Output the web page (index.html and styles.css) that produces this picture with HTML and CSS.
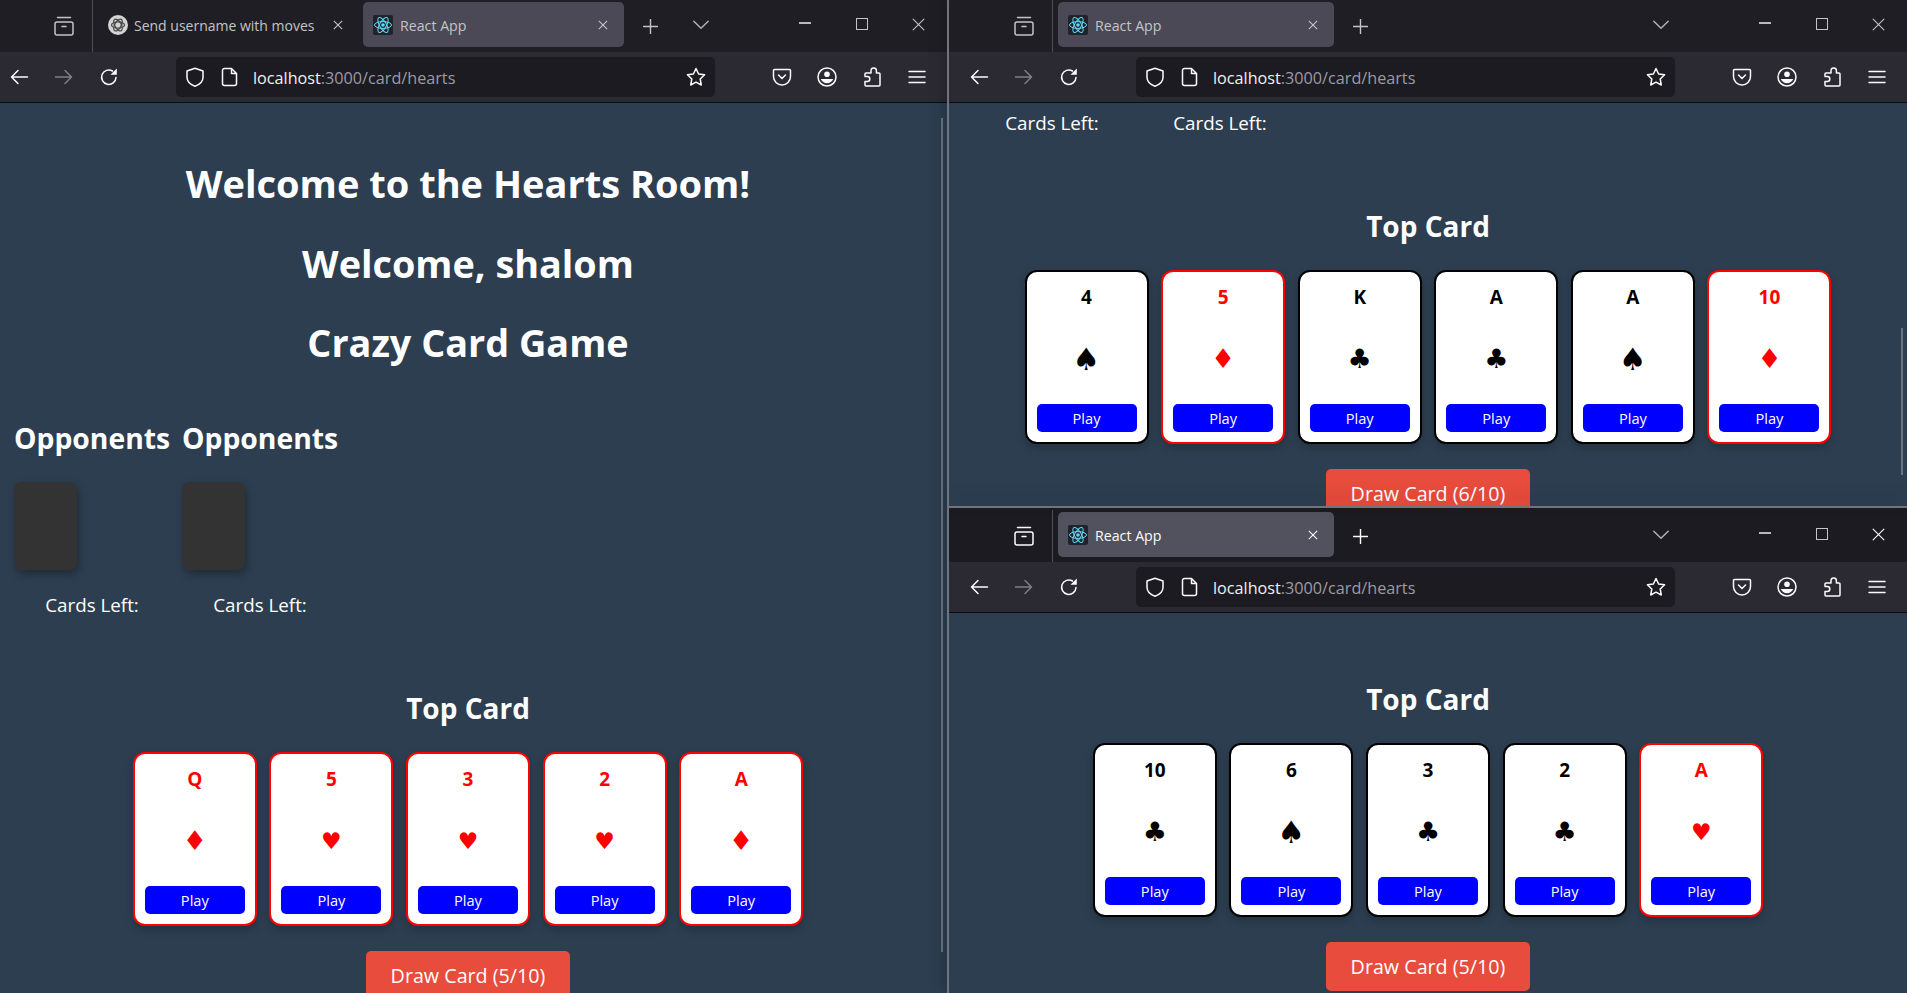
FILE: index.html
```html
<!DOCTYPE html>
<html lang="en">
<head>
  <meta charset="UTF-8" />
  <title>React App</title>
  <link rel="stylesheet" href="styles.css">
</head>
<body>
  <svg class="sprites" width="0" height="0">
    <symbol id="i-archive" viewBox="0 0 20 20"><path d="M3.5 1.5h13M8 10.5h4"/><rect x="1" y="6" width="18" height="13" rx="2"/></symbol>
    <symbol id="i-back" viewBox="0 0 20 20"><path d="M18.5 10H2.5M9 3.5 2.5 10 9 16.5"/></symbol>
    <symbol id="i-forward" viewBox="0 0 20 20"><path d="M1.5 10h16M11 3.5l6.5 6.5-6.5 6.500"/></symbol>
    <symbol id="i-reload" viewBox="0 0 20 20"><path d="M17 10.5A7.2 7.2 0 1 1 13.5 4"/><path class="solid" d="M17.800 1.500v6.300h-6.300z"/></symbol>
    <symbol id="i-shield" viewBox="0 0 20 20"><path d="M10 1.200 18 4v6.200c0 4.600-3.600 7.400-8 9-4.400-1.600-8-4.400-8-9V4z"/></symbol>
    <symbol id="i-page" viewBox="0 0 20 20"><path d="M4.500 1.500h7l5 5V16.500a2 2 0 0 1-2 2h-10a2 2 0 0 1-2-2v-13a2 2 0 0 1 2-2zM11.500 1.500v5h5"/></symbol>
    <symbol id="i-star" viewBox="0 0 20 20"><path d="m10 1.500 2.600 5.500 6 .8-4.400 4.200 1.100 6L10 15.100 4.700 18l1.100-6-4.400-4.200 6-.8z"/></symbol>
    <symbol id="i-pocket" viewBox="0 0 20 20"><path d="M2.500 2.500h15a1 1 0 0 1 1 1v6a8.500 8.500 0 0 1-17 0v-6a1 1 0 0 1 1-1z"/><path d="M6.500 8 10 11.500 13.500 8"/></symbol>
    <symbol id="i-account" viewBox="0 0 20 20"><circle cx="10" cy="10" r="9"/><circle class="solid" cx="10" cy="7.300" r="2.800"/><path class="solid" d="M3.800 12h12.400a6.700 6.700 0 0 1-12.400 0z"/></symbol>
    <symbol id="i-puzzle" viewBox="0 0 20 20"><path d="M3 9.500V7a1 1 0 0 1 1-1h5V3.800a2.700 2.700 0 0 1 5.400 0V6H17a1 1 0 0 1 1 1v11a1 1 0 0 1-1 1H4a1 1 0 0 1-1-1v-3.500h2.300a2.500 2.500 0 0 0 0-5z"/></symbol>
    <symbol id="i-menu" viewBox="0 0 20 20"><path d="M2 4.500h16M2 10h16M2 15.500h16"/></symbol>
    <symbol id="i-x" viewBox="0 0 12 12"><path d="m1 1 10 10M11 1 1 11"/></symbol>
    <symbol id="i-plus" viewBox="0 0 16 16"><path d="M8 .5v15M.5 8h15"/></symbol>
    <symbol id="i-chevron" viewBox="0 0 16 10"><path d="m.8 1.200 7.200 7 7.200-7"/></symbol>
    <symbol id="i-react" viewBox="0 0 20 20">
      <rect class="react-bg" width="20" height="20" rx="2"/>
      <g class="react-atom"><ellipse cx="10" cy="10" rx="8.500" ry="3.400"/><ellipse cx="10" cy="10" rx="8.500" ry="3.400" transform="rotate(60 10 10)"/><ellipse cx="10" cy="10" rx="8.500" ry="3.400" transform="rotate(120 10 10)"/><circle class="react-dot" cx="10" cy="10" r="1.800"/></g>
    </symbol>
    <symbol id="i-gpt" viewBox="0 0 20 20">
      <circle class="gpt-bg" cx="10" cy="10" r="10"/>
      <g class="gpt-knot"><ellipse cx="10" cy="10" rx="6.500" ry="3.200"/><ellipse cx="10" cy="10" rx="6.500" ry="3.200" transform="rotate(60 10 10)"/><ellipse cx="10" cy="10" rx="6.500" ry="3.200" transform="rotate(120 10 10)"/></g>
    </symbol>
  </svg>

  <!-- left window -->
  <section class="window window-left">
    <div class="tabbar">
      <svg class="ico archive"><use href="#i-archive"/></svg>
      <span class="tab-sep"></span>
      <div class="tab tab-plain">
        <svg class="favicon"><use href="#i-gpt"/></svg>
        <span class="tab-title">Send username with moves</span>
        <svg class="tab-close"><use href="#i-x"/></svg>
      </div>
      <div class="tab tab-current">
        <svg class="favicon"><use href="#i-react"/></svg>
        <span class="tab-title">React App</span>
        <svg class="tab-close"><use href="#i-x"/></svg>
      </div>
      <svg class="ico plus"><use href="#i-plus"/></svg>
      <svg class="ico chevron"><use href="#i-chevron"/></svg>
      <svg class="ico win-min"><use href="#i-menu"/></svg>
      <span class="win-max"></span>
      <svg class="ico win-close"><use href="#i-x"/></svg>
    </div>
    <div class="toolbar">
      <svg class="ico nav"><use href="#i-back"/></svg>
      <svg class="ico nav nav-off"><use href="#i-forward"/></svg>
      <svg class="ico nav"><use href="#i-reload"/></svg>
      <div class="urlbar">
        <svg class="ico url-shield"><use href="#i-shield"/></svg>
        <svg class="ico url-page"><use href="#i-page"/></svg>
        <span class="url-text"><b>localhost</b>:3000/card/hearts</span>
        <svg class="ico url-star"><use href="#i-star"/></svg>
      </div>
      <svg class="ico tool tool-first"><use href="#i-pocket"/></svg>
      <svg class="ico tool"><use href="#i-account"/></svg>
      <svg class="ico tool"><use href="#i-puzzle"/></svg>
      <svg class="ico tool"><use href="#i-menu"/></svg>
    </div>
    <main class="content content-full">
      <h1>Welcome to the Hearts Room!</h1>
      <h2 class="sub">Welcome, shalom</h2>
      <h2 class="sub sub-last">Crazy Card Game</h2>
      <div class="opponents">
        <div class="opp">
          <h3>Opponents</h3>
          <div class="opp-card"></div>
          <p class="cards-left">Cards Left:</p>
        </div>
        <div class="opp">
          <h3>Opponents</h3>
          <div class="opp-card"></div>
          <p class="cards-left">Cards Left:</p>
        </div>
      </div>
      <h3 class="top-card">Top Card</h3>
      <div class="hand">
        <div class="card red"><span class="rank">Q</span><span class="suit">♦</span><button class="play">Play</button></div>
        <div class="card red"><span class="rank">5</span><span class="suit suit-heart">♥</span><button class="play">Play</button></div>
        <div class="card red"><span class="rank">3</span><span class="suit suit-heart">♥</span><button class="play">Play</button></div>
        <div class="card red"><span class="rank">2</span><span class="suit suit-heart">♥</span><button class="play">Play</button></div>
        <div class="card red"><span class="rank">A</span><span class="suit">♦</span><button class="play">Play</button></div>
      </div>
      <button class="draw">Draw Card (5/10)</button>
    </main>
    <span class="thumb thumb-left"></span>
  </section>

  <div class="split-v"></div>

  <div class="stack">
    <!-- top right window -->
    <section class="window window-top">
      <div class="tabbar">
        <svg class="ico archive"><use href="#i-archive"/></svg>
        <span class="tab-sep"></span>
        <div class="tab tab-current tab-wide">
          <svg class="favicon"><use href="#i-react"/></svg>
          <span class="tab-title">React App</span>
          <svg class="tab-close"><use href="#i-x"/></svg>
        </div>
        <svg class="ico plus"><use href="#i-plus"/></svg>
        <svg class="ico chevron"><use href="#i-chevron"/></svg>
        <svg class="ico win-min"><use href="#i-menu"/></svg>
        <span class="win-max"></span>
        <svg class="ico win-close"><use href="#i-x"/></svg>
      </div>
      <div class="toolbar">
        <svg class="ico nav"><use href="#i-back"/></svg>
        <svg class="ico nav nav-off"><use href="#i-forward"/></svg>
        <svg class="ico nav"><use href="#i-reload"/></svg>
        <div class="urlbar">
          <svg class="ico url-shield"><use href="#i-shield"/></svg>
          <svg class="ico url-page"><use href="#i-page"/></svg>
          <span class="url-text"><b>localhost</b>:3000/card/hearts</span>
          <svg class="ico url-star"><use href="#i-star"/></svg>
        </div>
        <svg class="ico tool tool-first"><use href="#i-pocket"/></svg>
        <svg class="ico tool"><use href="#i-account"/></svg>
        <svg class="ico tool"><use href="#i-puzzle"/></svg>
        <svg class="ico tool"><use href="#i-menu"/></svg>
      </div>
      <main class="content content-scrolled">
        <div class="opponents">
          <div class="opp"><p class="cards-left cards-left-top">Cards Left:</p></div>
          <div class="opp"><p class="cards-left cards-left-top">Cards Left:</p></div>
        </div>
        <h3 class="top-card">Top Card</h3>
        <div class="hand">
          <div class="card"><span class="rank">4</span><span class="suit suit-spade">♠</span><button class="play">Play</button></div>
          <div class="card red"><span class="rank">5</span><span class="suit">♦</span><button class="play">Play</button></div>
          <div class="card"><span class="rank">K</span><span class="suit">♣</span><button class="play">Play</button></div>
          <div class="card"><span class="rank">A</span><span class="suit">♣</span><button class="play">Play</button></div>
          <div class="card"><span class="rank">A</span><span class="suit suit-spade">♠</span><button class="play">Play</button></div>
          <div class="card red"><span class="rank">10</span><span class="suit">♦</span><button class="play">Play</button></div>
        </div>
        <button class="draw">Draw Card (6/10)</button>
      </main>
      <span class="thumb thumb-top"></span>
    </section>

    <div class="split-h"></div>

    <!-- bottom right window, this one has focus -->
    <section class="window window-bottom focused">
      <div class="tabbar">
        <svg class="ico archive"><use href="#i-archive"/></svg>
        <span class="tab-sep"></span>
        <div class="tab tab-current tab-wide">
          <svg class="favicon"><use href="#i-react"/></svg>
          <span class="tab-title">React App</span>
          <svg class="tab-close"><use href="#i-x"/></svg>
        </div>
        <svg class="ico plus"><use href="#i-plus"/></svg>
        <svg class="ico chevron"><use href="#i-chevron"/></svg>
        <svg class="ico win-min"><use href="#i-menu"/></svg>
        <span class="win-max"></span>
        <svg class="ico win-close"><use href="#i-x"/></svg>
      </div>
      <div class="toolbar">
        <svg class="ico nav"><use href="#i-back"/></svg>
        <svg class="ico nav nav-off"><use href="#i-forward"/></svg>
        <svg class="ico nav"><use href="#i-reload"/></svg>
        <div class="urlbar">
          <svg class="ico url-shield"><use href="#i-shield"/></svg>
          <svg class="ico url-page"><use href="#i-page"/></svg>
          <span class="url-text"><b>localhost</b>:3000/card/hearts</span>
          <svg class="ico url-star"><use href="#i-star"/></svg>
        </div>
        <svg class="ico tool tool-first"><use href="#i-pocket"/></svg>
        <svg class="ico tool"><use href="#i-account"/></svg>
        <svg class="ico tool"><use href="#i-puzzle"/></svg>
        <svg class="ico tool"><use href="#i-menu"/></svg>
      </div>
      <main class="content content-bottom">
        <h3 class="top-card top-card-first">Top Card</h3>
        <div class="hand">
          <div class="card"><span class="rank">10</span><span class="suit">♣</span><button class="play">Play</button></div>
          <div class="card"><span class="rank">6</span><span class="suit suit-spade">♠</span><button class="play">Play</button></div>
          <div class="card"><span class="rank">3</span><span class="suit">♣</span><button class="play">Play</button></div>
          <div class="card"><span class="rank">2</span><span class="suit">♣</span><button class="play">Play</button></div>
          <div class="card red"><span class="rank">A</span><span class="suit suit-heart">♥</span><button class="play">Play</button></div>
        </div>
        <button class="draw">Draw Card (5/10)</button>
      </main>
    </section>
  </div>
</body>
</html>
```

FILE: styles.css
```css
html, body {
  margin: 0;
  height: 100%;
}
body {
  display: flex;
  width: 1907px;
  height: 993px;
  overflow: hidden;
  background: #2c3e50;
  font-family: "Open Sans", "Noto Sans", sans-serif;
}
.sprites {
  position: absolute;
}
.sprites .solid {
  fill: currentColor;
  stroke: none;
}
.react-bg {
  fill: #20232a;
  stroke: none;
}
.react-atom {
  stroke: #61dafb;
  stroke-width: 1;
  fill: none;
}
.react-dot {
  fill: #61dafb;
  stroke: none;
}
.gpt-bg {
  fill: #d4d4d4;
  stroke: none;
}
.gpt-knot {
  stroke: #4a4a4a;
  stroke-width: 1.3;
  fill: none;
}

/* windows */
.window {
  position: relative;
  display: flex;
  flex-direction: column;
  width: 958px;
  flex: none;
  overflow: hidden;
  background: #1f1e25;
  color: #fff;
}
.window-left {
  height: 993px;
  margin-left: -11px;
}
.window-top {
  height: 506px;
}
.window-bottom {
  height: 485px;
  padding-top: 2px;
  box-sizing: border-box;
  background: #1c1b22;
}
.split-v {
  width: 2px;
  flex: none;
  background: #70757b;
  position: relative;
  z-index: 3;
}
.split-h {
  height: 2px;
  background: #70757b;
  position: relative;
  z-index: 3;
  box-shadow: 0 -8px 16px rgba(0, 0, 0, 0.28);
}
.stack {
  width: 958px;
  flex: none;
  display: flex;
  flex-direction: column;
  box-shadow: -6px 0 14px rgba(0, 0, 0, 0.18);
  position: relative;
  z-index: 2;
}

/* browser chrome */
.ico {
  flex: none;
  fill: none;
  stroke: currentColor;
  stroke-width: 1.5;
  stroke-linecap: round;
  stroke-linejoin: round;
}
.tabbar {
  display: flex;
  align-items: center;
  height: 52px;
  flex: none;
  padding-left: 65px;
  padding-right: 22px;
  color: #c4c4c8;
  font-size: 14.2px;
}
.focused .tabbar {
  color: #fbfbfe;
}
.archive {
  width: 20px;
  height: 20px;
}
.tab-sep {
  width: 1px;
  height: 52px;
  margin: 0 5px 0 18px;
  background: #4f4e57;
}
.tab {
  display: flex;
  align-items: center;
  flex: none;
  box-sizing: border-box;
  width: 261px;
  height: 45px;
  margin-bottom: 3px;
  padding: 0 16px 0 10px;
  border-radius: 5px;
}
.tab-plain {
  margin-right: 4px;
  font-size: 14px;
}
.tab-current {
  background: #4a4955;
}
.tab-current .tab-title {
  margin-left: 7px;
}
.focused .tab-current {
  background: #52525e;
}
.tab-wide {
  width: 276px;
}
.favicon {
  width: 20px;
  height: 20px;
  flex: none;
}
.tab-title {
  margin-left: 6px;
  padding-top: 1px;
  white-space: nowrap;
}
.tab-close {
  width: 10px;
  height: 10px;
  margin-left: auto;
  fill: none;
  stroke: currentColor;
  stroke-width: 1.3;
}
.plus {
  width: 15px;
  height: 15px;
  margin-left: 19px;
}
.chevron {
  width: 16px;
  height: 10px;
  margin-left: auto;
  margin-right: 90px;
  margin-bottom: 3px;
  color: #b0b0b4;
}
.win-min {
  width: 12px;
  height: 2px;
  margin-bottom: 6px;
  margin-right: 45px;
  background: #b9b9bc;
  stroke: none;
}
.win-max {
  box-sizing: border-box;
  width: 12px;
  height: 12px;
  margin-bottom: 4px;
  margin-right: 44px;
  border: 1px solid #c4c4c8;
}
.win-close {
  width: 13px;
  height: 13px;
  margin-bottom: 4px;
  stroke-width: 1;
}
.toolbar {
  display: flex;
  align-items: center;
  height: 50px;
  flex: none;
  padding-left: 20px;
  background: #2b2a33;
  border-bottom: 1px solid #0c0c0d;
  color: #fbfbfe;
}
.nav {
  width: 20px;
  height: 20px;
  margin-right: 25px;
}
.nav-off {
  opacity: 0.4;
}
.urlbar {
  display: flex;
  align-items: center;
  flex: none;
  box-sizing: border-box;
  width: 539px;
  height: 40px;
  margin-left: 32px;
  padding: 0 9px 0 9px;
  background: #1c1b22;
  border-radius: 5px;
}
.url-shield {
  width: 20px;
  height: 20px;
}
.url-page {
  width: 20px;
  height: 20px;
  margin-left: 15px;
}
.url-text {
  margin-left: 13px;
  padding-top: 1px;
  font-size: 16.2px;
  color: #9b9ba0;
  white-space: nowrap;
}
.url-text b {
  font-weight: 400;
  color: #f0f0f3;
}
.url-star {
  width: 20px;
  height: 20px;
  margin-left: auto;
}
.tool {
  width: 20px;
  height: 20px;
  margin-left: 25px;
}
.tool-first {
  margin-left: 57px;
}
.thumb {
  position: absolute;
  left: 952px;
  width: 2px;
  background: #6a7480;
}
.thumb-left {
  top: 118px;
  height: 834px;
}
.thumb-top {
  top: 328px;
  height: 147px;
}

/* the game page */
.content {
  flex: 1;
  display: flex;
  flex-direction: column;
  align-items: center;
  background: #2c3e50;
  color: #fff;
}
.content h1, .content h2, .content h3, .content p {
  margin: 0;
}
.content-full {
  padding-top: 56px;
}
.content-scrolled {
  padding-top: 8px;
}
.content-bottom {
  padding-top: 67px;
}
h1 {
  font-size: 38px;
  line-height: 48px;
  font-weight: 700;
}
.sub {
  margin-top: 33px !important;
  font-size: 37.8px;
  line-height: 48px;
  font-weight: 700;
}
.sub-last {
  margin-top: 31px !important;
}
.opponents {
  align-self: flex-start;
  display: flex;
  gap: 12px;
  padding-left: 25px;
}
.content-full .opponents {
  margin-top: 53px;
}
.opp {
  width: 156px;
  display: flex;
  flex-direction: column;
}
.opp h3 {
  font-size: 28.3px;
  line-height: 36px;
  font-weight: 700;
  white-space: nowrap;
}
.opp-card {
  width: 63px;
  height: 88px;
  margin-top: 26px;
  background: #333;
  border-radius: 8px;
  box-shadow: 2px 4px 8px rgba(0, 0, 0, 0.3);
}
.cards-left {
  margin-top: 23px !important;
  font-size: 18.800px;
  line-height: 24px;
  text-align: center;
}
.cards-left-top {
  margin-top: 0 !important;
}
.top-card {
  margin-top: 72px !important;
  font-size: 28px;
  line-height: 38px;
  font-weight: 700;
}
.top-card-first {
  margin-top: 0 !important;
}
.hand {
  display: flex;
  justify-content: center;
  gap: 12.6px;
  margin-top: 25px;
}
.card {
  box-sizing: border-box;
  width: 124px;
  height: 174px;
  padding-top: 13px;
  display: flex;
  flex-direction: column;
  align-items: center;
  background: #fff;
  border: 2px solid #000;
  border-radius: 12px;
  box-shadow: 0 4px 8px rgba(0, 0, 0, 0.2);
  color: #000;
}
.card.red {
  border-color: #f00;
  color: #f00;
}
.rank {
  font-size: 19px;
  line-height: 24px;
  font-weight: 700;
}
.suit {
  margin-top: 32px;
  height: 36px;
  font-family: "DejaVu Sans", sans-serif;
  font-size: 27px;
  line-height: 36px;
}
.suit-heart {
  font-size: 23px;
}
.suit-spade {
  font-size: 31px;
}
.play {
  width: 100px;
  height: 28px;
  margin-top: 27px;
  padding: 0;
  border: 0;
  border-radius: 5px;
  background: #00f;
  color: #fff;
  font-family: inherit;
  font-size: 14.6px;
}
.draw {
  flex: none;
  width: 204px;
  height: 49px;
  margin-top: 25px;
  padding: 0;
  border: 0;
  border-radius: 5px;
  background: #e74c3c;
  color: #fff;
  font-family: inherit;
  font-size: 19.7px;
}
```
